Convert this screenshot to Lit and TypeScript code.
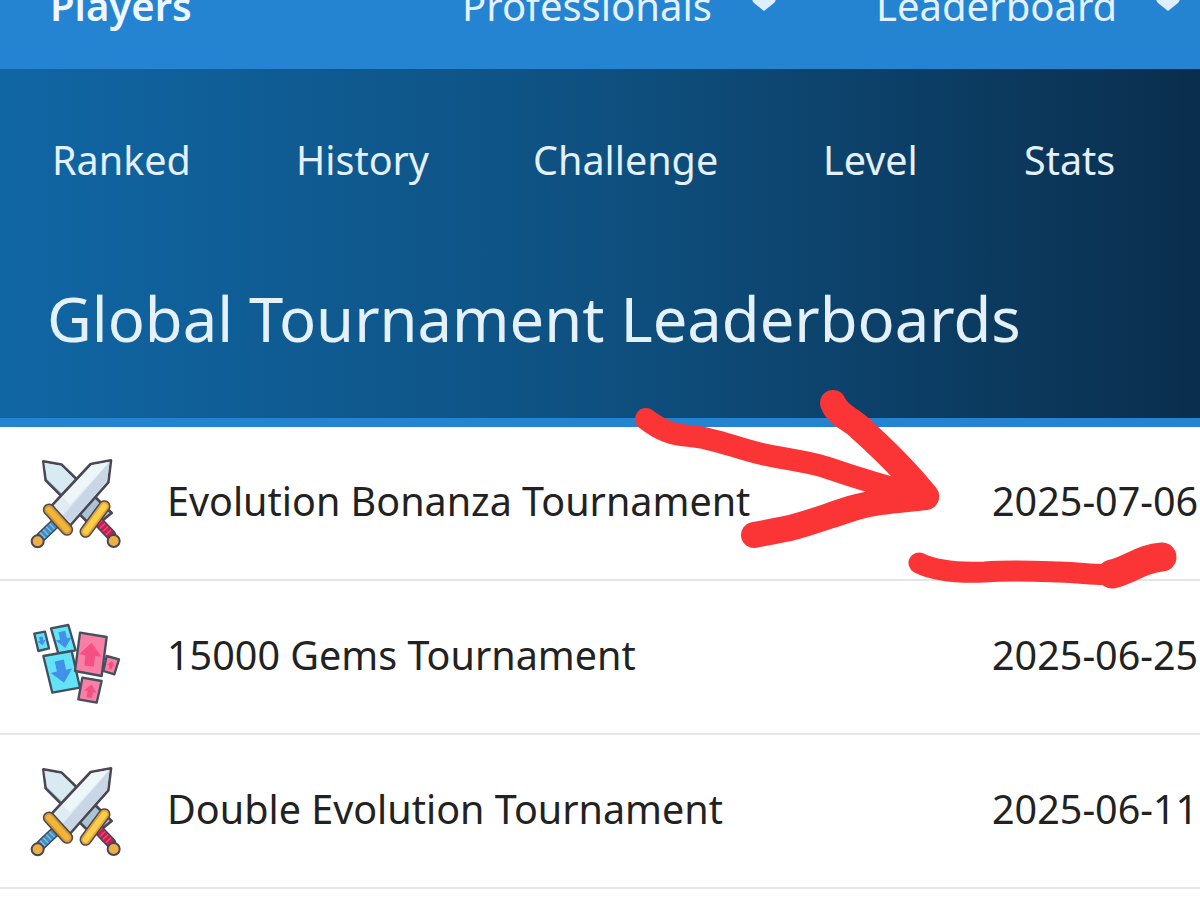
import { LitElement, html, css, svg } from "lit";
import { customElement } from "lit/decorators.js";

const OUT = "#4a4753";
const stripes = (d: string, color: string, band: string) => svg`
  <path d="${d}" stroke="${OUT}" stroke-width="32" stroke-linecap="round"/>
  <path d="${d}" stroke="${color}" stroke-width="22" stroke-linecap="butt"/>
  <path d="${d}" stroke="${band}" stroke-width="22" stroke-dasharray="4 9"/>`;
const guard = (d: string, color: string, shade: string) => svg`
  <path d="${d}" stroke="${OUT}" stroke-width="37" stroke-linecap="round"/>
  <path d="${d}" stroke="${shade}" stroke-width="28" stroke-linecap="round"/>
  <path d="${d}" stroke="${color}" stroke-width="17" stroke-linecap="round"/>`;

const swords = svg`<svg class="ico" viewBox="0 -3 300 306" fill="none">
  <path d="M55 25 L110 35 L260 180 L205 225 L62 82 Z" fill="#aac4d4" stroke="${OUT}" stroke-width="8" stroke-linejoin="round"/>
  <path d="M58 29 L108 38 L175 105 L120 130 L66 78 Z" fill="#d8eaf2"/>
  ${stripes("M222 208 L258 246", "#c91d54", "#f04a78")}
  <circle cx="266" cy="264" r="18" fill="#eeb044" stroke="${OUT}" stroke-width="6"/>
  ${guard("M182 236 L238 160", "#fbcf4e", "#e8a52f")}
  <path d="M258 22 L197 33 L78 160 L135 218 L250 88 Z" fill="#dfecf3" stroke="${OUT}" stroke-width="8" stroke-linejoin="round"/>
  <path d="M254 26 L200 37 L112 132 L135 155 Z" fill="#eef6fa"/>
  <path d="M254 26 L246 86 L135 212 L112 190 Z" fill="#c8d6e5"/>
  ${stripes("M92 210 L48 252", "#3f8fc2", "#7cc3e6")}
  <circle cx="38" cy="265" r="18" fill="#eeb044" stroke="${OUT}" stroke-width="6"/>
  ${guard("M72 170 L126 230", "#f0b63c", "#d9982a")}
</svg>`;

const arrow = (x: number, y: number, s: number, r: number, c: string) =>
  svg`<path transform="translate(${x} ${y}) rotate(${r}) scale(${s})" d="M0 -22 L21 2 L9 2 L9 22 L-9 22 L-9 2 L-21 2 Z" fill="${c}"/>`;

const card = (pts: string, fill: string) =>
  svg`<polygon points="${pts}" fill="${fill}" stroke="#43505f" stroke-width="7" stroke-linejoin="round"/>`;

const CY = "#62e3f7";
const PK = "#f97fa4";
const BL = "#4390e8";
const RD = "#f54f84";

const cards = svg`<svg class="ico" viewBox="0 -45 300 306">
  ${card("28,38 60,32 72,82 40,90", CY)}
  ${card("78,22 130,12 152,88 100,98", CY)}
  ${card("55,105 140,90 165,200 82,215", CY)}
  ${card("165,35 245,48 230,165 150,150", PK)}
  ${card("245,105 282,115 268,160 235,150", PK)}
  ${card("172,170 230,180 215,245 160,235", PK)}
  ${arrow(50, 60, 0.6, 168, BL)}
  ${arrow(116, 56, 1.15, 168, BL)}
  ${arrow(110, 152, 1.55, 168, BL)}
  ${arrow(196, 100, 1.6, 6, RD)}
  ${arrow(258, 132, 0.55, 10, RD)}
  ${arrow(196, 210, 0.9, 10, RD)}
</svg>`;

const caret = svg`<svg class="caret" viewBox="0 0 26 14"><path d="M1 0 H25 Q25 3 23 5 L13 13 L3 5 Q1 3 1 0 Z" fill="#dceeff"/></svg>`;

@customElement("app-root")
export class AppRoot extends LitElement {
  static styles = css`
    :host {
      display: block;
      position: relative;
      width: 1200px;
      height: 923px;
      overflow: hidden;
      background: #fff;
      font-family: "Noto Sans", "Liberation Sans", sans-serif;
    }
    .top {
      height: 69px;
      background: #2484d2;
      overflow: hidden;
      display: flex;
      align-items: flex-end;
      padding: 0 0 38px 50px;
      box-sizing: border-box;
      color: #e4f1fc;
      font-size: 40px;
      line-height: 50px;
      white-space: nowrap;
    }
    .top b { font-weight: 600; width: 412px; color: #eef7fe; }
    .top .p { display: flex; align-items: flex-end; }
    .p1 { width: 414px; }
    .caret { width: 26px; height: 14px; flex: none; margin: 0 0 19px 39px; }
    .p2 .caret { margin-left: 38px; }
    .hero {
      height: 349px;
      box-sizing: border-box;
      background: linear-gradient(90deg, #1066a4 0%, #0e5080 50%, #0a2e4d 100%);
      color: #e4f1fa;
      padding: 63px 0 0 0;
    }
    .tabs {
      display: grid;
      grid-template-columns: 244px 237px 290px 201px 1fr;
      padding-left: 52px;
      font-size: 39.5px;
      line-height: 56px;
      white-space: nowrap;
    }
    h1 {
      margin: 87px 0 0 47px;
      font-weight: 400;
      font-size: 61.5px;
      line-height: 86px;
      white-space: nowrap;
    }
    .bar { height: 9px; background: #2484d2; }
    .row {
      height: 151px;
      display: grid;
      grid-template-columns: 167px 825px 1fr;
      align-items: center;
      border-bottom: 2px solid #e3e5e6;
      color: #222;
      font-size: 39.5px;
      white-space: nowrap;
    }
    .row:nth-of-type(n + 2) { height: 152px; }
    .cell-ico { padding-left: 25px; display: flex; }
    .ico { width: 100px; height: 102px; display: block; filter: blur(0.6px); }
    .name, .date { padding-bottom: 5px; }
    .ink {
      position: absolute;
      left: 0;
      top: 0;
      width: 1200px;
      height: 923px;
      pointer-events: none;
    }
  `;

  render() {
    const rows = [
      [swords, "Evolution Bonanza Tournament", "2025-07-06"],
      [cards, "15000 Gems Tournament", "2025-06-25"],
      [swords, "Double Evolution Tournament", "2025-06-11"],
    ];
    return html`
      <div class="top">
        <b>Players</b>
        <div class="p p1"><span>Professionals</span>${caret}</div>
        <div class="p p2"><span>Leaderboard</span>${caret}</div>
      </div>
      <div class="hero">
        <div class="tabs">
          <span>Ranked</span><span>History</span><span>Challenge</span><span>Level</span><span>Stats</span>
        </div>
        <h1>Global Tournament Leaderboards</h1>
      </div>
      <div class="bar"></div>
      ${rows.map(
        (r) => html`<div class="row">
          <div class="cell-ico">${r[0]}</div>
          <div class="name">${r[1]}</div>
          <div class="date">${r[2]}</div>
        </div>`
      )}
      <svg class="ink" viewBox="0 0 1200 923" fill="none" stroke="#fb3535" stroke-linecap="round" stroke-linejoin="round">
        <path stroke-width="22" d="M646 419 C660 430 672 435 690 436 C715 438 735 448 762 454 C790 460 805 461 825 467 C860 479 890 488 925 497"/>
        <path stroke-width="26" d="M833 403 C838 416 850 418 860 428 C880 446 905 470 926 496"/>
        <path stroke-width="26" d="M926 497 C900 500 875 501 850 509 C825 517 810 523 790 528 C775 531 765 533 754 535"/>
        <path stroke-width="21" d="M919 563 C935 571 960 573 985 572 C1010 570 1030 571 1060 572 C1085 573 1100 576 1115 574"/>
        <path stroke-width="29" d="M1112 574 C1130 570 1142 558 1162 557"/>
      </svg>
    `;
  }
}
